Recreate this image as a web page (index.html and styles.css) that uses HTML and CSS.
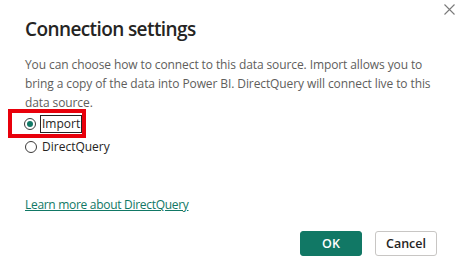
FILE: index.html
```html
<!DOCTYPE html>
<html lang="en">
<head>
    <meta charset="UTF-8">
    <meta name="viewport" content="width=device-width, initial-scale=1.0">
    <title>Connection settings</title>
    <link rel="stylesheet" href="styles.css">
</head>
<body>
    <div class="dialog">
        <button class="close-btn" aria-label="Close">
            <svg width="11" height="11" viewBox="0 0 11 11">
                <path d="M0.5 0.5 L10.5 10.5 M10.5 0.5 L0.5 10.5" stroke="#7a7a7a" stroke-width="1.1" fill="none"/>
            </svg>
        </button>

        <h1 class="title">Connection settings</h1>

        <p class="description">
            You can choose how to connect to this data source. Import allows you to
            bring a copy of the data into Power BI. DirectQuery will connect live to this
            data source.
        </p>

        <div class="options">
            <div class="highlight">
                <label class="option">
                    <span class="radio checked"></span>
                    <span class="option-label focused">Import</span>
                </label>
            </div>
            <label class="option">
                <span class="radio"></span>
                <span class="option-label">DirectQuery</span>
            </label>
        </div>

        <a class="learn-more" href="#">Learn more about DirectQuery</a>

        <div class="actions">
            <button class="btn btn-primary">OK</button>
            <button class="btn btn-secondary">Cancel</button>
        </div>
    </div>
</body>
</html>
```

FILE: styles.css
```css
* {
    margin: 0;
    padding: 0;
    box-sizing: border-box;
}

body {
    font-family: 'Open Sans', 'Segoe UI', sans-serif;
    background: #ffffff;
    width: 459px;
    height: 264px;
    overflow: hidden;
}

.dialog {
    position: relative;
    height: 264px;
    padding: 16px 22px 0 25px;
    display: flex;
    flex-direction: column;
}

.close-btn {
    position: absolute;
    top: 4px;
    right: 4px;
    border: none;
    background: none;
    width: 11px;
    height: 11px;
    display: flex;
}

.title {
    font-size: 19px;
    font-weight: 600;
    letter-spacing: -0.6px;
    color: #252423;
    line-height: 26px;
}

.description {
    margin-top: 13px;
    font-size: 12px;
    letter-spacing: -0.1px;
    line-height: 19px;
    color: #605e5c;
    width: 408px;
}

.options {
    display: flex;
    flex-direction: column;
    margin-left: -17px;
}

.highlight {
    border: 4px solid #e8000b;
    width: 78px;
    height: 29px;
    margin-top: -3px;
    padding-left: 12px;
    display: flex;
    align-items: center;
}

.option {
    display: flex;
    align-items: center;
    gap: 4px;
    font-size: 12px;
    color: #252423;
    height: 18px;
}

.options > .option {
    margin-left: 17px;
}

.radio {
    width: 12px;
    height: 12px;
    border: 1px solid #3b3a39;
    border-radius: 50%;
    display: flex;
    align-items: center;
    justify-content: center;
    flex-shrink: 0;
}

.radio.checked::after {
    content: "";
    width: 6px;
    height: 6px;
    border-radius: 50%;
    background: #117865;
}

.option-label {
    line-height: 16px;
    padding: 0 1px;
}

.option-label.focused {
    border: 1px solid #252423;
}

.learn-more {
    margin-top: 40px;
    font-size: 12px;
    letter-spacing: -0.3px;
    color: #117865;
    text-decoration: underline;
    align-self: flex-start;
}

.actions {
    display: flex;
    justify-content: flex-end;
    gap: 13px;
    margin-top: 18px;
}

.btn {
    width: 62px;
    height: 25px;
    border-radius: 3px;
    font-family: inherit;
    font-size: 12.5px;
    font-weight: 600;
}

.btn-primary {
    background: #117865;
    border: 1px solid #117865;
    color: #ffffff;
}

.btn-secondary {
    background: #ffffff;
    border: 1px solid #c8c6c4;
    color: #252423;
}
```
